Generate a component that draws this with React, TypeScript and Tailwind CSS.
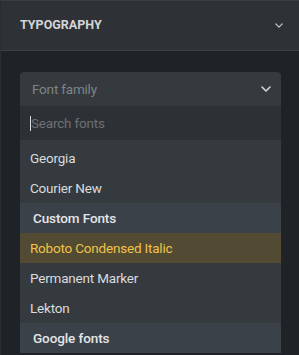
import React from "react";

const Chevron = ({ className }: { className?: string }) => (
  <svg className={className} width="10" height="6" viewBox="0 0 10 6" fill="none">
    <path d="M1 1l4 4 4-4" stroke="currentColor" strokeWidth="1.6" strokeLinecap="round" strokeLinejoin="round" />
  </svg>
);

export default function App() {
  const font = { fontFamily: 'Roboto, "Noto Sans", sans-serif' };
  return (
    <div className="w-[299px] h-[355px] overflow-hidden bg-[#1f2226] border-l border-[#2b2e32]" style={font}>
      <div className="h-[51px] bg-[#2e3135] border-t border-[#3a3d41] border-b border-b-[#3c3f43] flex items-center justify-between pl-[19px] pr-[16px]">
        <span className="text-[12.5px] font-bold tracking-[0px] text-[#d3d5d8]">TYPOGRAPHY</span>
        <Chevron className="text-[#c4c7ca] w-[8px] h-[5px]" />
      </div>
      <div className="pt-[21px] px-[19px] pr-[18px]">
        <div className="rounded-t-[4px] bg-[#353a3e] h-[34px] flex items-center justify-between pl-[12px] pr-[10px]">
          <span className="text-[13.5px] tracking-[-0.2px] text-[#7f8489]">Font family</span>
          <Chevron className="text-[#d4d6d9] w-[10px] h-[6px]" />
        </div>
        <div className="h-[34px] bg-[#2d3034] flex items-center pl-[10px]">
          <span className="w-px h-[15px] bg-[#d9dbde]" />
          <span className="text-[13.5px] tracking-[-0.2px] text-[#6c7176]">Search fonts</span>
        </div>
        <div className="bg-[#353a3e] pt-[3px]">
          {[
            { t: "Georgia" },
            { t: "Courier New" },
            { t: "Custom Fonts", g: true },
            { t: "Roboto Condensed Italic", a: true },
            { t: "Permanent Marker" },
            { t: "Lekton" },
            { t: "Google fonts", g: true },
          ].map((it) => (
            <div
              key={it.t}
              className={
                it.g
                  ? "h-[30px] flex items-center pl-[13px] bg-[#3b4148] text-[13.5px] font-medium tracking-[-0.1px] text-[#e4e6e8]"
                  : it.a
                  ? "h-[30px] flex items-center pl-[10px] bg-[#524a32] text-[13.5px] tracking-[-0.2px] text-[#f1c24a]"
                  : "h-[30px] flex items-center pl-[10px] text-[13.5px] tracking-[-0.2px] text-[#d9dbde]"
              }
            >
              {it.t}
            </div>
          ))}
        </div>
      </div>
    </div>
  );
}
